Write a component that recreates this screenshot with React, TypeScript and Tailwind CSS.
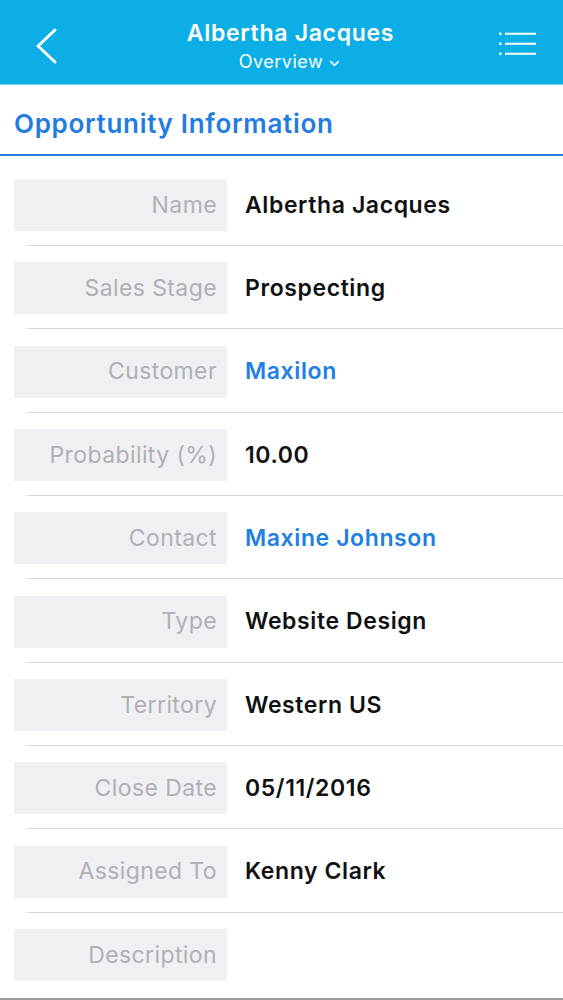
import { ChevronDown } from 'lucide-react';

type Field = { label: string; value?: string; link?: boolean };

const fields: Field[] = [
  { label: 'Name', value: 'Albertha Jacques' },
  { label: 'Sales Stage', value: 'Prospecting' },
  { label: 'Customer', value: 'Maxilon', link: true },
  { label: 'Probability (%)', value: '10.00' },
  { label: 'Contact', value: 'Maxine Johnson', link: true },
  { label: 'Type', value: 'Website Design' },
  { label: 'Territory', value: 'Western US' },
  { label: 'Close Date', value: '05/11/2016' },
  { label: 'Assigned To', value: 'Kenny Clark' },
  { label: 'Description' },
];

function BackIcon() {
  return (
    <svg className="w-[24px] h-[36px]" viewBox="0 0 24 36" fill="none" stroke="white" strokeWidth={3} strokeLinecap="round" strokeLinejoin="round">
      <path d="M21 2 4 18l17 16" />
    </svg>
  );
}

function MenuIcon() {
  return (
    <svg className="w-[40px] h-[26px]" viewBox="0 0 40 26" fill="none" stroke="white" strokeWidth={2}>
      <rect x="1" y="1.5" width="2.5" height="2.5" fill="white" stroke="none" />
      <rect x="1" y="11.5" width="2.5" height="2.5" fill="white" stroke="none" />
      <rect x="1" y="21.5" width="2.5" height="2.5" fill="white" stroke="none" />
      <path d="M7 2.75h31M7 12.75h31M7 22.75h31" />
    </svg>
  );
}

export default function App() {
  return (
    <div className="w-[563px] h-[1000px] bg-white overflow-hidden flex flex-col" style={{ fontFamily: 'Inter, "Open Sans", sans-serif' }}>
      {/* Nav bar */}
      <div className="h-[85px] bg-[#0bafe6] border-b border-[#7fd0ef] flex items-start justify-between shrink-0">
        <div className="ml-[34px] mt-[28px]">
          <BackIcon />
        </div>
        <div className="flex flex-col items-center text-white mt-[17px] ml-[25px]">
          <div className="text-[23px] font-semibold leading-[32px] tracking-[0.7px]">Albertha Jacques</div>
          <div className="flex items-center gap-[4px] text-[18px] leading-[22px] tracking-[0.5px] mt-[2px]">
            Overview
            <ChevronDown className="w-[15px] h-[15px] mt-[3px]" strokeWidth={2.5} />
          </div>
        </div>
        <div className="mr-[25px] mt-[31px]">
          <MenuIcon />
        </div>
      </div>

      {/* Section title */}
      <div className="h-[71px] flex items-center pt-[8px] px-[14px] border-b-2 border-[#2a7fde] shrink-0">
        <h1 className="text-[26px] font-semibold text-[#1f7ce0] tracking-[0.7px]">Opportunity Information</h1>
      </div>

      {/* Fields */}
      <div className="flex flex-col pt-[23px]">
        {fields.map((f, i) => (
          <div key={f.label} className="flex flex-col">
            <div className="flex items-center h-[52px]">
              <div className="ml-[14px] w-[213px] h-full bg-[#efeff4] flex items-center justify-end pr-[10px] text-[23px] tracking-[0.4px] text-[#b0b0b6]">
                {f.label}
              </div>
              {f.value && (
                <div className={`ml-[18px] text-[23px] font-semibold tracking-[0.6px] ${f.link ? 'text-[#1f80e4]' : 'text-[#111]'}`}>
                  {f.value}
                </div>
              )}
            </div>
            {i < fields.length - 1 && <div className="ml-[26px] mt-[14px] mb-[16.33px] h-px bg-[#d9d9dd]" />}
          </div>
        ))}
      </div>
      <div className="mt-auto h-[2px] bg-[#9a9a9a]" />
    </div>
  );
}
